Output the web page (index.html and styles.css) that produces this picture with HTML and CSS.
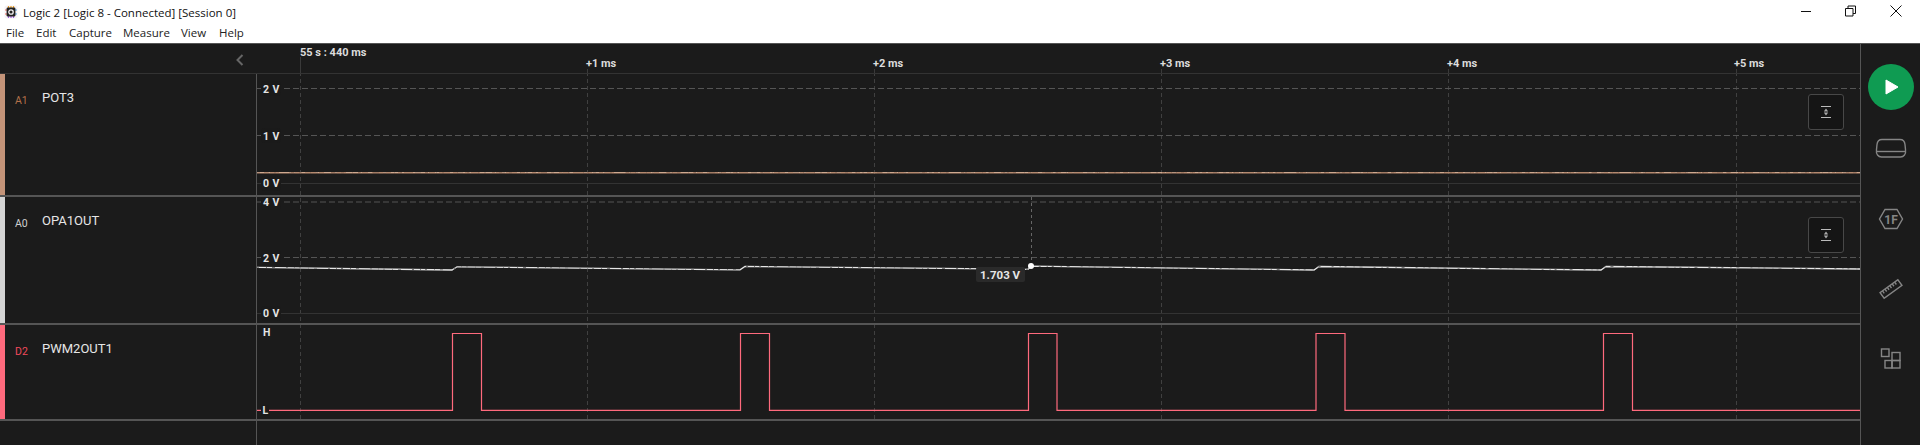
FILE: index.html
```html
<!DOCTYPE html>
<html lang="en">
<head>
<meta charset="utf-8">
<title>Logic 2</title>
<link rel="stylesheet" href="styles.css">
</head>
<body>
<div class="app">
  <header class="titlebar">
    <svg class="logo" viewBox="0 0 14 14" width="14" height="14">
      <rect x="0.500" y="0.500" width="13" height="13" rx="2" fill="#f6f3f6"/>
      <path d="M4.500 1v2.500M7 1v2.500M9.500 1v2.500" stroke="#f0a020" stroke-width="1.200"/>
      <path d="M4.500 10.500v2.500M7 10.500v2.500M9.500 10.500v2.500" stroke="#a060e0" stroke-width="1.200"/>
      <path d="M1 5h2M1 9h2" stroke="#f06a5a" stroke-width="1"/>
      <path d="M11 5h2M11 9h2" stroke="#50a0e0" stroke-width="1"/>
      <rect x="2.600" y="2.600" width="8.800" height="8.800" rx="1.200" fill="#222"/>
      <circle cx="7" cy="7" r="2.200" fill="none" stroke="#f4f1f4" stroke-width="1.300"/>
    </svg>
    <span class="title-text">Logic 2 [Logic 8 - Connected] [Session 0]</span>
    <div class="window-controls">
      <svg class="win-icon" viewBox="0 0 12 12" width="12" height="12"><path d="M1 6.500h10" stroke="#111" stroke-width="1"/></svg>
      <svg class="win-icon" viewBox="0 0 12 12" width="12" height="12"><path d="M.5 3.500h7.500v7.500h-7.500zM3 3.500v-2.500h7.500v7.500h-2.500" fill="none" stroke="#111" stroke-width="1"/></svg>
      <svg class="win-icon" viewBox="0 0 12 12" width="12" height="12"><path d="M.5 .5l11 11M11.500 .5l-11 11" stroke="#111" stroke-width="1"/></svg>
    </div>
  </header>
  <nav class="menubar">
    <span class="m-file">File</span><span class="m-edit">Edit</span><span class="m-capture">Capture</span><span class="m-measure">Measure</span><span class="m-view">View</span><span>Help</span>
  </nav>
  <main class="workspace">
    <section class="content">
      <div class="ruler-row">
        <div class="ruler-left">
          <svg class="collapse" viewBox="0 0 8 12" width="8" height="12"><path d="M6.500 1L1.500 6l5 5" fill="none" stroke="#666" stroke-width="2"/></svg>
        </div>
        <svg class="ruler" width="1604" height="29" viewBox="256 44 1604 29">
          <defs>
            <g id="grid" class="vgrid">
              <path d="M300.500 44V445"/>
              <path d="M587.500 44V445"/>
              <path d="M874.500 44V445"/>
              <path d="M1161.500 44V445"/>
              <path d="M1448.500 44V445"/>
              <path d="M1736.500 44V445"/>
            </g>
          </defs>
          <path class="vstart" d="M300.500 57V73"/>
          <path class="vstart" d="M587.500 69V73M874.500 69V73M1161.500 69V73M1448.500 69V73M1736.500 69V73"/>
          <text class="t-main" x="300" y="56">55 s : 440 ms</text>
          <text class="t-tick" x="586" y="67">+1 ms</text>
          <text class="t-tick" x="873" y="67">+2 ms</text>
          <text class="t-tick" x="1160" y="67">+3 ms</text>
          <text class="t-tick" x="1447" y="67">+4 ms</text>
          <text class="t-tick" x="1734" y="67">+5 ms</text>
        </svg>
      </div>

      <div class="track track-a1">
        <div class="label">
          <span class="chan chan-a1">A1</span><span class="name">POT3</span>
        </div>
        <svg class="plot" width="1603" height="121" viewBox="257 74 1603 121">
          <use href="#grid"/>
          <path class="hdash" d="M257 88.500H1860M257 135.500H1860"/>
          <path class="hsolid" d="M257 183.500H1860"/>
          <rect class="pill" x="261" y="81" width="20" height="15" rx="4"/>
          <rect class="pill" x="261" y="128" width="20" height="15" rx="4"/>
          <rect class="pill" x="261" y="176" width="20" height="15" rx="4"/>
          <text class="axis" x="263" y="93">2 V</text>
          <text class="axis" x="263" y="140">1 V</text>
          <text class="axis" x="263" y="187">0 V</text>
          <path class="sig-a1" d="M257 172.800H1860"/>
          <path class="sig-a1-hi" d="M257 172.500H1860"/>
          <path class="sig-a1-lo" d="M257 173.200H1860"/>
        </svg>
      </div>

      <div class="track track-a0">
        <div class="label">
          <span class="chan chan-a0">A0</span><span class="name">OPA1OUT</span>
        </div>
        <svg class="plot" width="1603" height="126" viewBox="257 197 1603 126">
          <use href="#grid"/>
          <path class="hdash" d="M257 202H1860M257 257.500H1860"/>
          <path class="hsolid" d="M257 313.500H1860"/>
          <rect class="pill" x="261" y="195" width="20" height="15" rx="4"/>
          <rect class="pill" x="261" y="250" width="20" height="15" rx="4"/>
          <rect class="pill" x="261" y="306" width="20" height="15" rx="4"/>
          <text class="axis" x="263" y="206">4 V</text>
          <text class="axis" x="263" y="262">2 V</text>
          <text class="axis" x="263" y="317">0 V</text>
          <path class="cursor" d="M1031.500 197V266"/>
          <polyline class="sig-a0" points="257,267.300 452,270 457,266.800 740,269.800 745,266.500 1028,269.300 1031,266.200 1314,270 1319,266.500 1601,270 1606,266.500 1860,269"/>
          <polyline class="sig-a0-lo" points="257,267.300 452,270 457,266.800 740,269.800 745,266.500 1028,269.300 1031,266.200 1314,270 1319,266.500 1601,270 1606,266.500 1860,269"/>
          <rect class="value-pill" x="976" y="267" width="49" height="15" rx="2"/>
          <text class="value" x="980" y="278.500">1.703 V</text>
          <circle class="marker" cx="1031" cy="266" r="3"/>
        </svg>
      </div>

      <div class="track track-d2">
        <div class="label">
          <span class="chan chan-d2">D2</span><span class="name">PWM2OUT1</span>
        </div>
        <svg class="plot" width="1603" height="94" viewBox="257 325 1603 94">
          <use href="#grid"/>
          <text class="axis" x="263" y="336">H</text>
          <polyline class="sig-d2" points="257,410.400 452.500,410.400 452.500,333.500 481.500,333.500 481.500,410.400 740.500,410.400 740.500,333.500 769.500,333.500 769.500,410.400 1028.500,410.400 1028.500,333.500 1057,333.500 1057,410.400 1316,410.400 1316,333.500 1345,333.500 1345,410.400 1603.500,410.400 1603.500,333.500 1632.500,333.500 1632.500,410.400 1860,410.400"/>
          <rect class="pill" x="261" y="405" width="8" height="11" rx="3"/>
          <text class="axis" x="262.500" y="414">L</text>
        </svg>
      </div>

      <div class="footer-row">
        <div class="footer-left"></div>
      </div>

      <button class="fit-btn fit-a1" type="button" aria-label="Fit">
        <svg viewBox="0 0 12 14" width="12" height="14"><path class="fit-line" d="M1 1.500h10M1 12.500h10"/><path class="fit-arrow" d="M6 3.500l2.200 3h-4.400zM6 10.500l2.200-3h-4.400z"/></svg>
      </button>
      <button class="fit-btn fit-a0" type="button" aria-label="Fit">
        <svg viewBox="0 0 12 14" width="12" height="14"><path class="fit-line" d="M1 1.500h10M1 12.500h10"/><path class="fit-arrow" d="M6 3.500l2.200 3h-4.400zM6 10.500l2.200-3h-4.400z"/></svg>
      </button>
    </section>

    <aside class="sidebar">
      <button class="play" type="button" aria-label="Start">
        <svg viewBox="0 0 14 16" width="14" height="16"><path d="M1 1l12 7-12 7z" fill="#fff" stroke="#fff" stroke-linejoin="round"/></svg>
      </button>
      <svg class="side-icon icon-device" viewBox="0 0 32 22" width="32" height="22">
        <path d="M7 1.500h18q4.500 0 5 5l.500 5q.500 4-1 5.500q-1.500 2-4 2h-19q-2.500 0-4-2q-1.500-1.500-1-5.500l.500-5q.500-5 5-5z"/>
        <path d="M2 13.500h28"/>
      </svg>
      <svg class="side-icon icon-hex" viewBox="0 0 26 22" width="26" height="22">
        <path d="M7 1.500h12l5.500 9.500-5.500 9.500h-12l-5.500-9.500z"/>
        <text class="hex-text" x="13" y="15.500">1F</text>
      </svg>
      <svg class="side-icon icon-ruler" viewBox="0 0 24 22" width="24" height="22">
        <g transform="rotate(-36 12 11)">
          <rect x="1" y="7.500" width="22" height="7"/>
          <path d="M4 7.500v3M7 7.500v3M10 7.500v3M13 7.500v3M16 7.500v3M19 7.500v3"/>
        </g>
      </svg>
      <svg class="side-icon icon-blocks" viewBox="0 0 22 22" width="22" height="22">
        <rect x="1.500" y="1" width="7.500" height="7.500"/>
        <rect x="12" y="4.500" width="8" height="8"/>
        <rect x="5" y="12.500" width="7" height="7.500"/>
        <rect x="12" y="12.500" width="8" height="7.500"/>
      </svg>
    </aside>
  </main>
</div>
</body>
</html>
```
FILE: styles.css
```css
* { box-sizing: border-box; }
html, body { margin: 0; height: 100%; overflow: hidden; background: #1b1b1b; }
.app { display: flex; flex-direction: column; width: 1920px; height: 445px; }

.titlebar {
  display: flex; align-items: center; height: 24px; padding: 0 0 0 4px; background: #fff;
  font: 11.500px "Open Sans", "Noto Sans", sans-serif; color: #111;
}
.logo { flex: none; margin-right: 5px; }
.window-controls { display: flex; gap: 33px; margin-left: auto; padding-right: 18px; }
.win-icon { display: block; margin-top: -3px; }

.menubar {
  display: flex; height: 20px; padding: 0 0 0 6px; background: #fff;
  border-bottom: 1px solid #555; font: 11.500px "Open Sans", "Noto Sans", sans-serif; color: #222;
  line-height: 17px;
}
.menubar span { flex: none; }
.m-file { width: 30px; }
.m-edit { width: 33px; }
.m-capture { width: 54px; }
.m-measure { width: 58px; }
.m-view { width: 38px; }

.workspace { flex: 1; display: flex; min-height: 0; }
.content { position: relative; width: 1860px; flex: none; display: flex; flex-direction: column; }
.sidebar {
  flex: 1; border-left: 1px solid #555; background: #1b1b1b;
  display: flex; flex-direction: column; align-items: center; padding-top: 20px;
}

.ruler-row { display: flex; height: 30px; border-bottom: 1px solid #333; flex: none; }
.ruler-left { width: 256px; display: flex; justify-content: flex-end; align-items: center; padding: 2px 6px 0 0; }
.ruler-left .collapse { margin-right: 6px; }
.ruler { display: block; flex: none; }
.t-main, .t-tick { font: 700 11px Roboto, sans-serif; fill: #dcdcdc; }
.vstart { stroke: #3a3a3a; fill: none; stroke-width: 1; }

.track { display: grid; grid-template-columns: 256px 1px 1603px; flex: none; border-bottom: 2px solid #555; }
.track::before { content: ""; grid-column: 2; grid-row: 1; background: #555; }
.track-a1 { height: 123px; }
.track-a0 { height: 128px; }
.track-d2 { height: 96px; }
.label { grid-column: 1; grid-row: 1; display: flex; align-items: flex-start; padding: 16px 0 0 10px; border-left: 5px solid; font-family: Roboto, sans-serif; }
.track-a1 .label { border-left-color: #c49479; }
.track-a0 .label { border-left-color: #d4d4d4; }
.track-d2 .label { border-left-color: #ff6a7d; }
.chan { width: 27px; font-size: 10.500px; line-height: 15px; margin-top: 3px; }
.chan-a1 { color: #b5714a; }
.chan-a0 { color: #cfcfcf; }
.chan-d2 { color: #f04a5c; }
.name { font-size: 13px; line-height: 16px; color: #e6e6e6; }
.plot { grid-column: 3; grid-row: 1; display: block; }

.vgrid path { stroke: #404040; stroke-dasharray: 4 3; fill: none; }
.hdash { stroke: #555; stroke-dasharray: 6 3; fill: none; }
.hsolid { stroke: #333; fill: none; }
.pill { fill: #1a1a1a; }
.axis { font: 700 10.500px Roboto, sans-serif; fill: #e4e4e4; letter-spacing: .04em; }

.sig-a1 { stroke: #b5896f; stroke-width: 1.400; fill: none; }
.sig-a1-hi { stroke: #e0bfa6; stroke-width: .6; stroke-dasharray: 7 4 2 9 12 3 1 6 4 11 3 5; fill: none; }
.sig-a1-lo { stroke: #5f4a3f; stroke-width: .7; stroke-dasharray: 3 8 1 5 2 13 6 4; fill: none; }
.sig-a0 { stroke: #e6e6e6; stroke-width: 1.300; fill: none; }
.sig-a0-lo { stroke: #777; stroke-width: 1; stroke-dasharray: 2 7 1 5 3 11 2 6 1 4; fill: none; }
.sig-d2 { stroke: #ff6a7d; stroke-width: 1.200; fill: none; }
.cursor { stroke: #666; stroke-dasharray: 3 3; stroke-width: 1; fill: none; }
.value-pill { fill: #2a2a2a; }
.value { font: 700 11.500px Roboto, sans-serif; fill: #e6e6e6; }
.marker { fill: #fff; }

.footer-row { flex: 1; display: flex; }
.footer-left { width: 257px; border-right: 1px solid #555; }

.fit-btn {
  position: absolute; left: 1808px; width: 36px; height: 36px; padding: 0; display: flex;
  align-items: center; justify-content: center; background: #151515;
  border: 1px solid #484848; border-radius: 3px;
}
.fit-a1 { top: 50px; }
.fit-a0 { top: 173px; }
.fit-line { stroke: #bbb; stroke-width: 1; fill: none; }
.fit-arrow { fill: #aaa; }

.play {
  width: 46px; height: 46px; border-radius: 50%; border: 0; padding: 0 0 0 3px; background: #0f9b52;
  display: flex; align-items: center; justify-content: center; flex: none;
}
.side-icon { display: block; flex: none; fill: none; stroke: #858585; stroke-width: 1.400; }
.icon-device { margin-top: 28px; }
.icon-hex { margin-top: 48px; }
.icon-ruler { margin-top: 48px; }
.icon-blocks { margin-top: 48px; }
.hex-text { font: 700 12px Roboto, sans-serif; fill: #858585; stroke: none; text-anchor: middle; }
```
